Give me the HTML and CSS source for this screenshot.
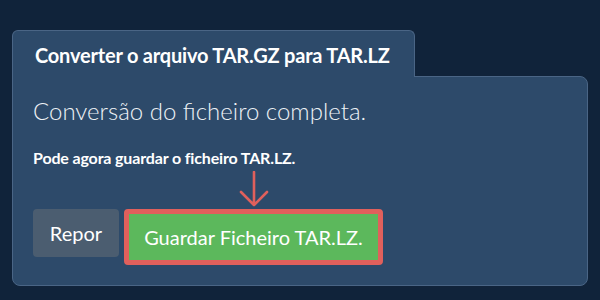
FILE: index.html
```html
<!DOCTYPE html>
<html lang="pt">
<head>
<meta charset="utf-8">
<title>Converter TAR.GZ para TAR.LZ</title>
<link rel="stylesheet" href="styles.css">
</head>
<body>
<div class="panel">
  <div class="tab">Converter o arquivo TAR.GZ para TAR.LZ</div>
  <div class="card">
    <h2 class="heading">Conversão do ficheiro completa.</h2>
    <p class="note">Pode agora guardar o ficheiro TAR.LZ.</p>
    <div class="actions">
      <button class="btn btn-reset">Repor</button>
      <div class="save-wrap">
        <svg class="arrow" width="30" height="36" viewBox="0 0 30 36" aria-hidden="true">
          <path d="M15 1 V34 M2 21 L15 34 L28 21" fill="none" stroke="#e0605c" stroke-width="2.6" stroke-linecap="round" stroke-linejoin="round"/>
        </svg>
        <button class="btn btn-save">Guardar Ficheiro TAR.LZ.</button>
      </div>
    </div>
  </div>
</div>
</body>
</html>
```

FILE: styles.css
```css
html, body {
  margin: 0;
  padding: 0;
}
body {
  background: #10233a;
  font-family: Lato, "Open Sans", sans-serif;
  color: #fff;
  width: 600px;
  height: 300px;
  overflow: hidden;
}
.panel {
  margin: 30px 0 0 12px;
  width: 576px;
}
.tab {
  display: inline-block;
  box-sizing: border-box;
  width: 403px;
  height: 47px;
  background: #2d4a6a;
  border: 1px solid #4a6585;
  border-bottom: none;
  border-radius: 6px 6px 0 0;
  padding: 12px 0 0 22px;
  font-size: 20px;
  font-weight: 700;
  line-height: 24px;
  letter-spacing: -0.2px;
  position: relative;
  z-index: 1;
  margin-bottom: -1px;
  vertical-align: top;
}
.card {
  background: #2d4a6a;
  border: 1px solid #4a6585;
  border-radius: 0 8px 8px 8px;
  padding: 19px 20px 20px 20px;
}
.heading {
  margin: 0;
  font-size: 24px;
  font-weight: 300;
  line-height: 30px;
  color: #eef2f6;
}
.note {
  margin: 23px 0 0 0;
  font-size: 16px;
  font-weight: 700;
  line-height: 18px;
  letter-spacing: -0.15px;
}
.actions {
  display: flex;
  align-items: flex-start;
  gap: 5px;
  margin-top: 42px;
}
.btn {
  font-family: Lato, "Open Sans", sans-serif;
  color: #fff;
  border: none;
  cursor: pointer;
  margin: 0;
}
.btn-reset {
  width: 86px;
  height: 48px;
  background: #4b5d70;
  border-radius: 4px;
  font-size: 20px;
  padding: 0;
}
.save-wrap {
  position: relative;
}
.arrow {
  position: absolute;
  left: 50%;
  bottom: 100%;
  margin-left: -15px;
  margin-bottom: 2px;
}
.btn-save {
  box-sizing: border-box;
  width: 259px;
  height: 56px;
  background: #5cb85c;
  border: 5px solid #e0605c;
  border-radius: 4px;
  font-size: 20px;
  padding: 0;
}
```
